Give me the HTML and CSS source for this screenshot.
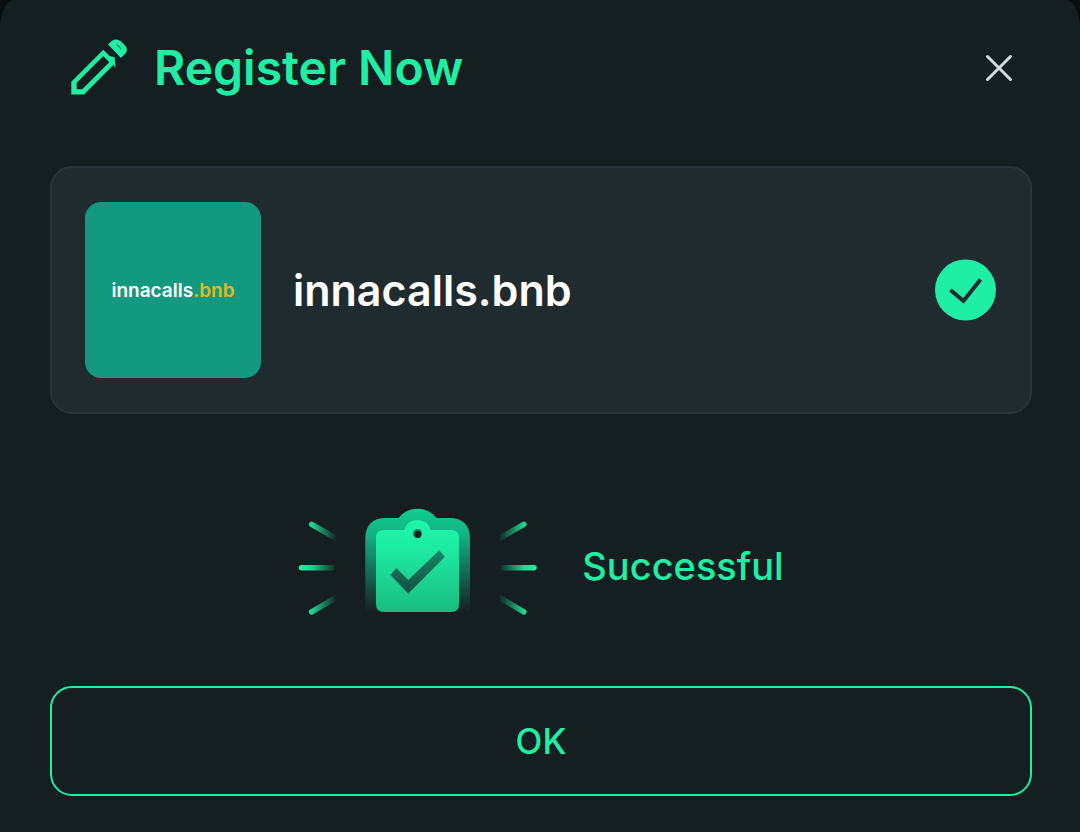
FILE: index.html
```
<!DOCTYPE html>
<html lang="en">
<head>
<meta charset="utf-8">
<meta name="viewport" content="width=device-width, initial-scale=1">
<title>Register Now</title>
<link rel="stylesheet" href="styles.css">
</head>
<body>
<main class="dialog" role="dialog" aria-labelledby="dialog-title">
  <header class="dialog-header">
    <svg class="icon-pencil" viewBox="70 38 60 60" aria-hidden="true">
      <path fill-rule="evenodd" d="M71.300 81.700L103.300 49.700L109.500 56L114.600 57.200L115.500 68.500L113.500 64.800L84 94.500H71.300ZM103.300 56L76.700 82.700V89.200H82.300L109.300 62.300Z"/>
      <path d="M108 44.500L112 40.800Q116.500 37.800 121 41.500L125.500 46Q128 49.500 126 52.800L121 58Z"/>
      <path class="slit" d="M115.500 44.500L118 44.800L121 47.800V49.500Z"/>
    </svg>
    <h1 class="dialog-title" id="dialog-title">Register Now</h1>
    <button class="close" type="button" aria-label="Close">
      <svg class="icon-close" viewBox="0 0 28 28" aria-hidden="true"><path d="M2.500 2.500L25.500 25.500M25.500 2.500L2.500 25.500"/></svg>
    </button>
  </header>

  <section class="domain-card">
    <div class="domain-tile"><span>innacalls</span><span class="suffix">.bnb</span></div>
    <h2 class="domain-name">innacalls.bnb</h2>
    <svg class="icon-check" viewBox="0 0 62 62" role="img" aria-label="Registered">
      <circle cx="31.500" cy="31" r="30.500"/>
      <path d="M16.500 31L29.500 42L46.500 20.500"/>
    </svg>
  </section>

  <section class="status" role="status">
    <svg class="icon-success" viewBox="297 506 240 112" aria-hidden="true">
      <defs>
        <linearGradient id="board" x1="0" y1="0" x2="0" y2="1"><stop offset="0" stop-color="#12cc90"/><stop offset=".25" stop-color="#11b382"/><stop offset="1" stop-color="#11b382" stop-opacity="0"/></linearGradient>
        <linearGradient id="sheet" x1="0" y1="0" x2="0" y2="1"><stop offset="0" stop-color="#1ff5aa"/><stop offset=".25" stop-color="#1eeea5"/><stop offset="1" stop-color="#1abd82"/></linearGradient>
        <linearGradient id="tick" x1="0" y1="0" x2="0" y2="1"><stop offset="0" stop-color="#168866"/><stop offset="1" stop-color="#164d42"/></linearGradient>
        <linearGradient id="ray" gradientUnits="userSpaceOnUse" x1="300" y1="0" x2="336" y2="0"><stop offset="0" stop-color="#22e8a0"/><stop offset=".3" stop-color="#1fd593"/><stop offset="1" stop-color="#1fd593" stop-opacity="0"/></linearGradient>
        <g id="rays" fill="none" stroke="url(#ray)" stroke-width="5.500" stroke-linecap="round"><path d="M310.700 524.300L337 539.500"/><path d="M300.500 567.800H331"/><path d="M310.700 611.800L337 596.500"/></g>
      </defs>
      <use href="#rays"/>
      <use href="#rays" transform="translate(833.500 0) scale(-1 1)"/>
      <path fill="url(#board)" d="M364.300 613V539Q364.300 518 385 518H397.500Q405 508.800 416.500 508.800T435.500 518H448Q469 518 469 539V613Z"/>
      <path fill="url(#sheet)" d="M375 538Q375 530 383 530H403.500Q406 520 416.500 520T429.500 530H450Q458 530 458 538V604Q458 612 450 612H383Q375 612 375 604Z"/>
      <circle cx="416.500" cy="533.500" r="4.500" fill="#12825f"/>
      <circle cx="416.800" cy="534.500" r="3.500" fill="#151e20"/>
      <path fill="url(#tick)" d="M395.300 568L407.300 580L438.300 550.300L444 556.700L407.300 593.500L389.300 575Z"/>
    </svg>
    <p class="status-text">Successful</p>
  </section>

  <button class="ok" type="button">OK</button>
</main>
</body>
</html>
```
FILE: styles.css
```
* { box-sizing: border-box; }

body {
  margin: 0;
  background: #080e0f;
  color: #fff;
  font-family: Inter, "Open Sans", sans-serif;
}

.dialog {
  display: flex;
  flex-direction: column;
  min-height: 100vh;
  padding: 32px 48px 36px 50px;
  border-radius: 14px 14px 0 0 / 28px 28px 0 0;
  background: #151e20;
}

.dialog-header {
  display: flex;
  align-items: center;
  gap: 24px;
  height: 72px;
  padding: 0 15px 0 20px;
  color: #1eefa5;
}

.icon-pencil { width: 60px; height: 60px; fill: #1eefa5; }
.icon-pencil .slit { fill: #158c65; }

.dialog-title {
  flex: 1;
  margin: 0;
  font-size: 48px;
  line-height: 56px;
  font-weight: 600;
}

.close {
  display: flex;
  padding: 4px;
  border: 0;
  background: none;
}

.icon-close {
  width: 28px;
  height: 28px;
  fill: none;
  stroke: #d3dcde;
  stroke-width: 3;
  stroke-linecap: round;
}

.domain-card {
  display: flex;
  align-items: center;
  gap: 32px;
  margin-top: 62px;
  padding: 34px 34px 34px 33px;
  border: 2px solid #29353a;
  border-radius: 22px;
  background: #202b2f;
}

.domain-tile {
  display: flex;
  align-items: center;
  justify-content: center;
  width: 176px;
  height: 176px;
  border-radius: 16px;
  background: #12997f;
  font-size: 19px;
  font-weight: 600;
}

.suffix { color: #e4b81d; }

.domain-name {
  flex: 1;
  margin: 0;
  font-size: 43px;
  line-height: 56px;
  font-weight: 600;
}

.icon-check { width: 62px; height: 62px; }
.icon-check circle { fill: #1eefa5; }
.icon-check path { fill: none; stroke: #202b2f; stroke-width: 4; }

.status {
  flex: 1;
  display: flex;
  align-items: center;
  justify-content: center;
  gap: 44px;
  padding-top: 24px;
}

.icon-success { width: 240px; height: 112px; }

.status-text {
  margin: 0;
  padding-top: 8px;
  color: #1eefa5;
  font-size: 38px;
  line-height: 48px;
  font-weight: 500;
}

.ok {
  height: 110px;
  border: 2px solid #1eefa5;
  border-radius: 22px;
  background: none;
  color: #1eefa5;
  font: 500 35px/40px Inter, "Open Sans", sans-serif;
}
```
